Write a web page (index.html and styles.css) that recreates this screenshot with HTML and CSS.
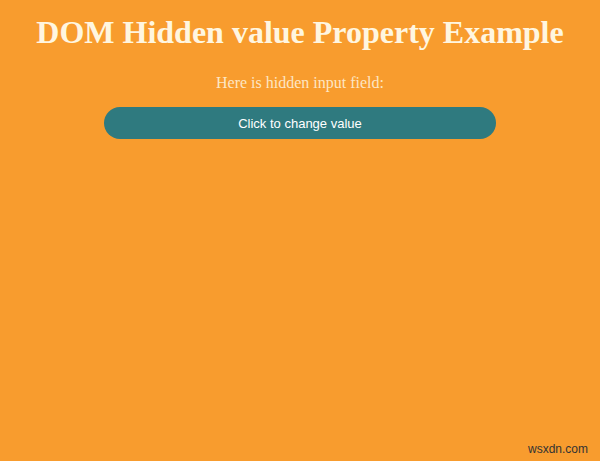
FILE: index.html
```html
<!DOCTYPE html>
<html>
<head>
<meta charset="utf-8">
<link rel="stylesheet" href="styles.css">
</head>
<body>
<div class="page">
  <h1 class="title">DOM Hidden value Property Example</h1>
  <p class="note">Here is hidden input field:</p>
  <button class="btn">Click to change value</button>
</div>
<div class="watermark">wsxdn.com</div>
</body>
</html>
```
FILE: styles.css
```css
html, body {
  margin: 0;
  padding: 0;
}
body {
  background: #f89c2e;
  width: 600px;
  height: 461px;
  overflow: hidden;
  position: relative;
  font-family: "Liberation Serif", "Times New Roman", serif;
}
.page {
  display: flex;
  flex-direction: column;
  align-items: center;
  padding-top: 14px;
}
.title {
  margin: 0;
  font-size: 32px;
  line-height: 36px;
  font-weight: bold;
  color: #fff6e0;
}
.note {
  margin: 23px 0 0 0;
  font-size: 16px;
  line-height: 20px;
  color: #fde6c4;
}
.btn {
  margin-top: 14px;
  width: 392px;
  height: 32px;
  border: none;
  border-radius: 16px;
  background: #2f7a7f;
  color: #ffffff;
  font-family: "Liberation Sans", Arial, sans-serif;
  font-size: 13px;
  padding: 0;
}
.watermark {
  position: absolute;
  right: 12px;
  bottom: 5px;
  font-family: "Liberation Sans", Arial, sans-serif;
  font-size: 12px;
  color: #333333;
}
```
